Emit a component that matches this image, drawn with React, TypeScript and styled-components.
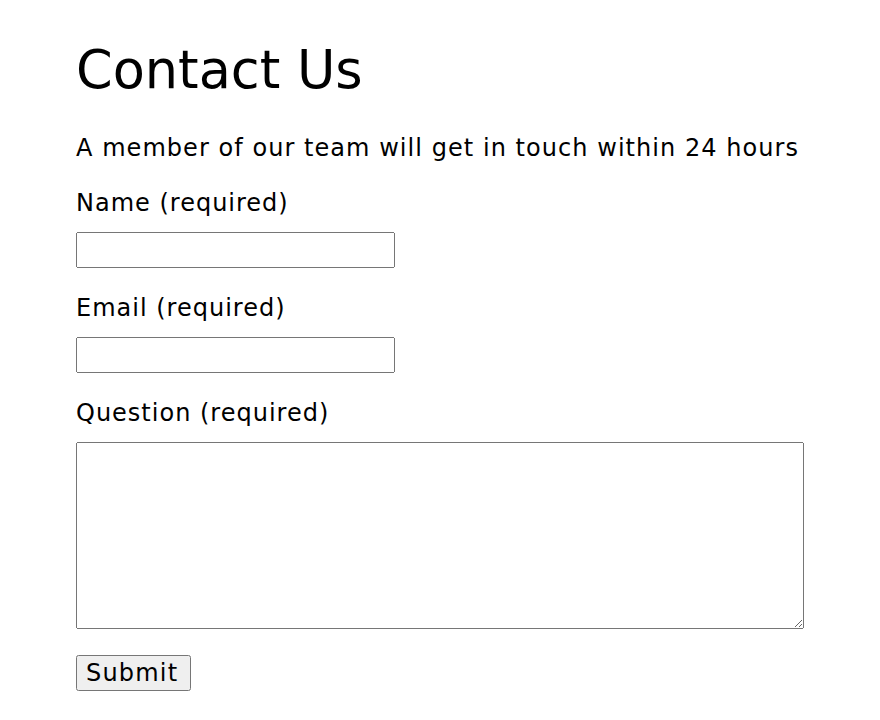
import React from "react";
import styled, { createGlobalStyle } from "styled-components";

const GlobalStyle = createGlobalStyle`
  html, body {
    margin: 0;
    padding: 0;
    background: #ffffff;
  }
  body {
    font-family: "DejaVu Sans", "Liberation Sans", sans-serif;
    color: #000000;
  }
`;

const Page = styled.main`
  max-width: 728px;
  margin: 0 auto;
  padding-top: 40px;
  display: flex;
  flex-direction: column;
`;

const Title = styled.h1`
  margin: 0;
  font-size: 52.5px;
  line-height: 60px;
  font-weight: 400;
  letter-spacing: 0;
`;

const Intro = styled.p`
  margin: 32px 0 0;
  font-size: 24px;
  line-height: 32px;
  letter-spacing: 1.05px;
`;

const Form = styled.form`
  display: flex;
  flex-direction: column;
  margin-top: 23px;
`;

const Field = styled.div<{ $first?: boolean }>`
  display: flex;
  flex-direction: column;
  align-items: flex-start;
  margin-top: ${(p) => (p.$first ? "0" : "24px")};
`;

const Label = styled.label`
  font-size: 24px;
  line-height: 32px;
  letter-spacing: 1px;
  margin-bottom: 13px;
`;

const TextInput = styled.input`
  box-sizing: border-box;
  width: 319px;
  height: 36px;
  margin: 0;
  font-family: inherit;
  font-size: 24px;
`;

const TextArea = styled.textarea`
  box-sizing: border-box;
  width: 728px;
  height: 187px;
  margin: 0;
  font-family: inherit;
  font-size: 24px;
`;

const SubmitButton = styled.button`
  align-self: flex-start;
  box-sizing: border-box;
  width: 115px;
  height: 36px;
  margin-top: 26px;
  padding: 1px 0 1px 8px;
  text-align: left;
  font-family: inherit;
  font-size: 24px;
  line-height: 30px;
  letter-spacing: 1.2px;
  color: #000000;
`;

export default function App() {
  return (
    <>
      <GlobalStyle />
      <Page>
        <Title>Contact Us</Title>
        <Intro>A member of our team will get in touch within 24 hours</Intro>
        <Form onSubmit={(e) => e.preventDefault()}>
          <Field $first>
            <Label htmlFor="name">Name (required)</Label>
            <TextInput id="name" type="text" />
          </Field>
          <Field>
            <Label htmlFor="email">Email (required)</Label>
            <TextInput id="email" type="email" />
          </Field>
          <Field>
            <Label htmlFor="question">Question (required)</Label>
            <TextArea id="question" />
          </Field>
          <SubmitButton type="submit">Submit</SubmitButton>
        </Form>
      </Page>
    </>
  );
}
